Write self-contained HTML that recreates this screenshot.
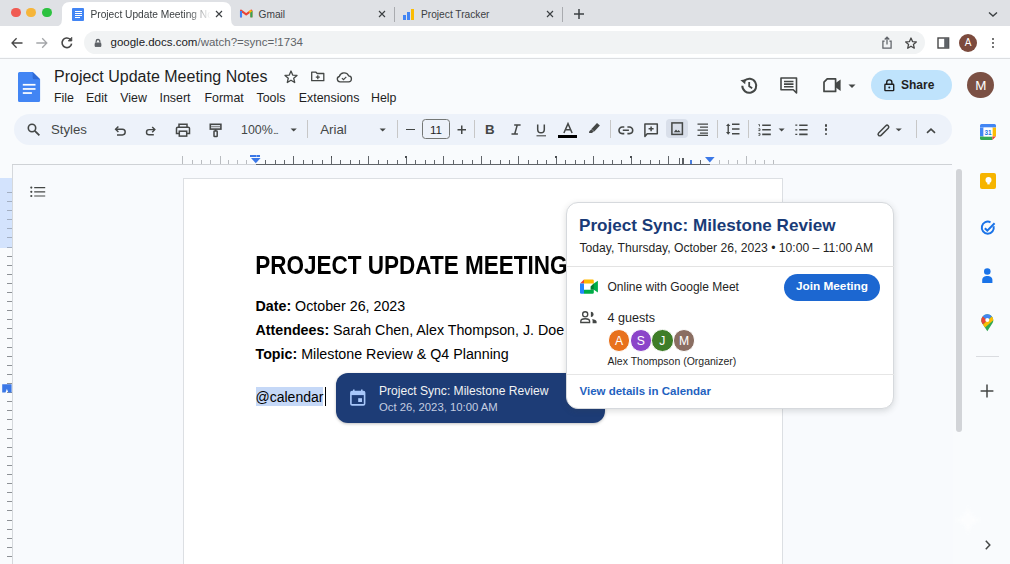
<!DOCTYPE html>
<html><head><meta charset="utf-8">
<style>
*{box-sizing:border-box;margin:0;padding:0}
html,body{width:1010px;height:564px;overflow:hidden;background:#f9fbfd;font-family:"Liberation Sans",sans-serif;color:#202124}
.a{position:absolute}
.t{position:absolute;white-space:nowrap;line-height:1}
svg{position:absolute;overflow:visible}
</style></head><body>

<!-- TAB STRIP -->
<div class="a" style="left:0;top:0;width:1010px;height:26px;background:#dfe1e5"></div>
<div class="a" style="left:10.9px;top:7.6px;width:9.8px;height:9.8px;border-radius:50%;background:#f05b53"></div>
<div class="a" style="left:26.3px;top:7.6px;width:9.8px;height:9.8px;border-radius:50%;background:#f6b53a"></div>
<div class="a" style="left:41.8px;top:7.6px;width:9.8px;height:9.8px;border-radius:50%;background:#2dc240"></div>

<!-- active tab with flares -->
<svg width="190" height="28" style="left:54px;top:0">
  <path d="M0 27 Q8 27 8 19 L8 10 Q8 2 16 2 L169 2 Q177 2 177 10 L177 19 Q177 27 185 27 Z" fill="#fff"/>
</svg>
<!-- docs tab icon -->
<div class="a" style="left:72px;top:8px;width:12px;height:12.5px;background:#4285f4;border-radius:1px"></div>
<div class="a" style="left:74.5px;top:11px;width:7px;height:1px;background:#fff"></div>
<div class="a" style="left:74.5px;top:13px;width:7px;height:1px;background:#fff"></div>
<div class="a" style="left:74.5px;top:15px;width:7px;height:1px;background:#fff"></div>
<div class="a" style="left:74.5px;top:17px;width:5px;height:1px;background:#fff"></div>
<div class="t" style="left:90.5px;top:9.5px;font-size:10.2px;color:#3c4043;width:120px;overflow:hidden;-webkit-mask-image:linear-gradient(90deg,#000 80%,transparent 100%)">Project Update Meeting Notes</div>
<svg width="10" height="10" style="left:214px;top:9px"><path d="M2 2L8 8M8 2L2 8" stroke="#3c4043" stroke-width="1.15"/></svg>

<!-- gmail -->
<svg width="13" height="10" style="left:240px;top:9.4px">
  <path d="M1 8.2V1.6L6.2 5.4L11.4 1.6V8.2" fill="none" stroke="#ea4335" stroke-width="2" stroke-linejoin="round"/>
  <path d="M1 2V8.4" stroke="#4285f4" stroke-width="2.1"/>
  <path d="M11.4 2V8.4" stroke="#34a853" stroke-width="2.1"/>
  <path d="M9.2 3.2L11.4 1.6" stroke="#fbbc04" stroke-width="2"/>
</svg>
<div class="t" style="left:258.5px;top:9.5px;font-size:10.2px;color:#3c4043">Gmail</div>
<svg width="10" height="10" style="left:376.5px;top:9px"><path d="M2 2L8 8M8 2L2 8" stroke="#3c4043" stroke-width="1.15"/></svg>
<div class="a" style="left:393.5px;top:7px;width:1px;height:15px;background:#a9abaf"></div>

<!-- project tracker chart icon -->
<div class="a" style="left:403px;top:15px;width:3px;height:5px;background:#4285f4"></div>
<div class="a" style="left:407px;top:12px;width:3px;height:8px;background:#4285f4"></div>
<div class="a" style="left:411px;top:8.5px;width:3.2px;height:11.5px;background:#fbbc04"></div>
<div class="t" style="left:421px;top:9.5px;font-size:10.2px;color:#3c4043">Project Tracker</div>
<svg width="10" height="10" style="left:544.5px;top:9px"><path d="M2 2L8 8M8 2L2 8" stroke="#3c4043" stroke-width="1.15"/></svg>
<div class="a" style="left:561.7px;top:7px;width:1px;height:15px;background:#a9abaf"></div>
<svg width="12" height="12" style="left:573px;top:8px"><path d="M6 1V11M1 6H11" stroke="#3c4043" stroke-width="1.5"/></svg>
<svg width="12" height="8" style="left:986.5px;top:10px"><path d="M2 2.5L6 6L10 2.5" fill="none" stroke="#3c4043" stroke-width="1.4"/></svg>

<!-- ADDRESS ROW -->
<div class="a" style="left:0;top:26px;width:1010px;height:31px;background:#fff"></div>
<div class="a" style="left:84px;top:31px;width:840.5px;height:23.3px;border-radius:11.6px;background:#f1f3f4"></div>
<div class="a" style="left:0;top:57.5px;width:1010px;height:1px;background:#dcdee1"></div>
<svg width="16" height="16" style="left:9px;top:35px"><path d="M13.5 8H3.2M7.6 3.3L3 8L7.6 12.7" fill="none" stroke="#474747" stroke-width="1.3"/></svg>
<svg width="16" height="16" style="left:34px;top:35px"><path d="M2.3 8H12.6M8.2 3.3L12.8 8L8.2 12.7" fill="none" stroke="#a4a6a9" stroke-width="1.3"/></svg>
<svg width="16" height="16" style="left:59px;top:35px"><path d="M12.6 8.6A4.8 4.8 0 1 1 11.2 4.4" fill="none" stroke="#474747" stroke-width="1.6"/><path d="M12.8 2.3V6H9.2Z" fill="#474747" stroke="#474747" stroke-width="0.8" stroke-linejoin="round"/></svg>
<!-- lock -->
<svg width="10" height="12" style="left:93px;top:38.4px"><path d="M3.2 4.6V3.3A1.8 1.8 0 0 1 6.8 3.3V4.6" fill="none" stroke="#5f6368" stroke-width="1.3"/><rect x="1.8" y="4.5" width="6.4" height="4.2" rx="0.6" fill="#5f6368"/><rect x="1.8" y="6" width="6.4" height="2.7" rx="0.6" fill="#5f6368"/></svg>
<div class="t" style="left:110.5px;top:37.3px;font-size:11.5px;color:#202124">google.docs.com<span style="color:#5f6368">/watch?=sync=!1734</span></div>
<!-- share -->
<svg width="14" height="14" style="left:879.7px;top:36.4px"><path d="M4.6 5H2.9V12H11.1V5H9.4" fill="none" stroke="#5f6368" stroke-width="1.25"/><path d="M7 8.6V1.4M4.7 3.5L7 1.2L9.3 3.5" fill="none" stroke="#5f6368" stroke-width="1.25"/></svg>
<!-- star -->
<svg width="14" height="14" style="left:904.2px;top:36.5px"><path d="M7 1L8.5 4.6L12.3 4.9L9.4 7.4L10.3 11.2L7 9.2L3.7 11.2L4.6 7.4L1.7 4.9L5.5 4.6Z" fill="none" stroke="#474747" stroke-width="1.3" stroke-linejoin="round"/></svg>
<!-- sidebar -->
<svg width="13" height="13" style="left:936.6px;top:37px"><rect x="1" y="1" width="10.6" height="10" fill="none" stroke="#474747" stroke-width="1.4"/><rect x="7.2" y="1" width="4.4" height="10" fill="#5f6368"/></svg>
<div class="a" style="left:959px;top:34px;width:18px;height:18px;border-radius:50%;background:#7c4a3d"></div>
<div class="t" style="left:959px;top:38.2px;width:18px;text-align:center;font-size:10px;color:#fff">A</div>
<div class="a" style="left:991.9px;top:38.2px;width:2.3px;height:2.3px;border-radius:50%;background:#474747"></div>
<div class="a" style="left:991.9px;top:42.1px;width:2.3px;height:2.3px;border-radius:50%;background:#474747"></div>
<div class="a" style="left:991.9px;top:46px;width:2.3px;height:2.3px;border-radius:50%;background:#474747"></div>

<!-- DOCS HEADER -->
<svg width="23" height="31" style="left:18px;top:71.8px">
  <path d="M1.5 0H14.7L22.1 7.3V28.4A1.5 1.5 0 0 1 20.6 29.9H1.5A1.5 1.5 0 0 1 0 28.4V1.5A1.5 1.5 0 0 1 1.5 0Z" fill="#4285f4"/>
  <path d="M14.7 0L22.1 7.3H16.2A1.5 1.5 0 0 1 14.7 5.8Z" fill="#2f6ad6"/>
  <rect x="4.8" y="11.9" width="12.7" height="1.7" fill="#fff"/>
  <rect x="4.8" y="16.1" width="12.7" height="1.7" fill="#fff"/>
  <rect x="4.8" y="20.2" width="9.1" height="1.7" fill="#fff"/>
</svg>
<div class="t" style="left:54px;top:69px;font-size:16px;color:#1f1f1f">Project Update Meeting Notes</div>
<svg width="14" height="14" style="left:284.4px;top:69.8px"><path d="M7 1L8.7 5.1L13 5.4L9.7 8.2L10.7 12.5L7 10.2L3.3 12.5L4.3 8.2L1 5.4L5.3 5.1Z" fill="none" stroke="#444746" stroke-width="1.3" stroke-linejoin="round"/></svg>
<svg width="14" height="11" style="left:310.8px;top:71.4px"><path d="M0.7 1.2H5L6.2 2.5H12.8V9.7H0.7Z" fill="none" stroke="#444746" stroke-width="1.3" stroke-linejoin="round"/><path d="M6.8 4.2V8.2M4.8 6.2H8.8" stroke="#444746" stroke-width="1.3"/></svg>
<svg width="16" height="11" style="left:336px;top:71.6px"><path d="M4 9.8H12.3A3 3 0 0 0 12.6 3.8A5 5 0 0 0 3.3 4.5A2.7 2.7 0 0 0 4 9.8Z" fill="none" stroke="#444746" stroke-width="1.3"/><path d="M5.9 6.1L7.5 7.6L10.3 4.8" fill="none" stroke="#444746" stroke-width="1.2"/></svg>

<div class="t" style="left:54px;top:91.9px;font-size:12.4px;color:#1f1f1f">File</div>
<div class="t" style="left:86px;top:91.9px;font-size:12.4px;color:#1f1f1f">Edit</div>
<div class="t" style="left:120.3px;top:91.9px;font-size:12.4px;color:#1f1f1f">View</div>
<div class="t" style="left:159.5px;top:91.9px;font-size:12.4px;color:#1f1f1f">Insert</div>
<div class="t" style="left:204.5px;top:91.9px;font-size:12.4px;color:#1f1f1f">Format</div>
<div class="t" style="left:256.5px;top:91.9px;font-size:12.4px;color:#1f1f1f">Tools</div>
<div class="t" style="left:298.8px;top:91.9px;font-size:12.4px;color:#1f1f1f">Extensions</div>
<div class="t" style="left:371px;top:91.9px;font-size:12.4px;color:#1f1f1f">Help</div>

<!-- history -->
<svg width="20" height="20" style="left:739px;top:75.5px">
  <path d="M3.3 9.8A7 7 0 1 0 5.2 5" fill="none" stroke="#444746" stroke-width="2"/>
  <path d="M1.4 4.2L6.6 3.2L6.2 8.3Z" fill="#444746"/>
  <path d="M10.2 6V10.2L13.2 12.2" fill="none" stroke="#444746" stroke-width="1.8"/>
</svg>
<!-- comment -->
<svg width="18" height="17" style="left:780px;top:76.8px">
  <path d="M1 1H16.5V16L13.3 12.8H1Z" fill="none" stroke="#444746" stroke-width="1.6" stroke-linejoin="round"/>
  <path d="M4 4.5H13.5M4 7.1H13.5M4 9.7H13.5" stroke="#444746" stroke-width="1.6"/>
</svg>
<!-- camera -->
<svg width="19" height="15" style="left:822.8px;top:77.8px">
  <path d="M4.2 0.9H12.6V13.4H1V4.1Z" fill="none" stroke="#444746" stroke-width="1.7" stroke-linejoin="round"/>
  <path d="M12.6 5.1L17.6 1.4V12.9L12.6 9.2Z" fill="#444746"/>
</svg>
<svg width="8" height="5" style="left:848px;top:83.5px"><path d="M0.5 0.5H7.5L4 4Z" fill="#444746"/></svg>

<div class="a" style="left:870.8px;top:69.6px;width:81px;height:30.5px;border-radius:15.25px;background:#bfe3fc"></div>
<svg width="11" height="13" style="left:884.3px;top:78.8px"><path d="M2.7 5.3V3.5A2.6 2.6 0 0 1 7.9 3.5V5.3" fill="none" stroke="#1f1f1f" stroke-width="1.4"/><rect x="0.9" y="5.3" width="8.8" height="6.3" rx="0.6" fill="none" stroke="#1f1f1f" stroke-width="1.4"/><circle cx="5.3" cy="8.5" r="1" fill="#1f1f1f"/></svg>
<div class="t" style="left:901px;top:78.8px;font-size:12px;font-weight:bold;color:#1f1f1f">Share</div>
<div class="a" style="left:967.4px;top:71.7px;width:26.8px;height:26.8px;border-radius:50%;background:#7b5044"></div>
<div class="t" style="left:967.4px;top:79px;width:26.8px;text-align:center;font-size:13.4px;color:#fff">M</div>

<!-- TOOLBAR -->
<div class="a" style="left:14px;top:113.5px;width:937.6px;height:31.4px;border-radius:15.7px;background:#edf2fa"></div>
<svg width="14" height="14" style="left:27.4px;top:122.8px"><circle cx="5" cy="5" r="3.7" fill="none" stroke="#444746" stroke-width="1.6"/><path d="M7.8 7.8L12.4 12.4" stroke="#444746" stroke-width="1.8"/></svg>
<div class="t" style="left:51px;top:123.4px;font-size:13.2px;color:#444746">Styles</div>
<!-- undo -->
<svg width="14" height="12" style="left:113.5px;top:125px"><path d="M1.8 4.3H8.4A2.8 2.8 0 0 1 8.4 9.9H3" fill="none" stroke="#444746" stroke-width="1.45"/><path d="M4.4 1.5L1.6 4.3L4.4 7.1" fill="none" stroke="#444746" stroke-width="1.45"/></svg>
<!-- redo -->
<svg width="12" height="12" style="left:145.3px;top:125px"><path d="M9.6 4.6H4.1A2.6 2.6 0 0 0 4.1 9.8H8.8" fill="none" stroke="#444746" stroke-width="1.45"/><path d="M7.2 2L9.8 4.6L7.2 7.2" fill="none" stroke="#444746" stroke-width="1.45"/></svg>
<!-- print -->
<svg width="16" height="14" style="left:175px;top:123px"><path d="M4 4.2V1.3H12V4.2" fill="none" stroke="#444746" stroke-width="1.5"/><path d="M4 10.6H1.5V5.5A1.3 1.3 0 0 1 2.8 4.2H13.2A1.3 1.3 0 0 1 14.5 5.5V10.6H12" fill="none" stroke="#444746" stroke-width="1.5"/><rect x="4.3" y="8.2" width="7.4" height="4.9" fill="none" stroke="#444746" stroke-width="1.5"/></svg>
<!-- paint format -->
<svg width="14" height="15" style="left:208.5px;top:122.5px"><rect x="1.3" y="1.3" width="10.6" height="4.8" fill="none" stroke="#444746" stroke-width="1.6"/><rect x="2.1" y="3" width="9" height="1.3" fill="#8a8d90"/><path d="M6.6 6.1V8" stroke="#444746" stroke-width="1.6"/><rect x="5" y="8" width="3.2" height="5.6" rx="0.6" fill="none" stroke="#444746" stroke-width="1.5"/></svg>
<div class="t" style="left:241px;top:123.7px;font-size:12.4px;color:#444746">100%<span style="font-size:6.5px;letter-spacing:-0.3px;margin-left:0.8px;font-weight:bold">...</span></div>
<svg width="8" height="5" style="left:290px;top:127.8px"><path d="M0.6 0.4H6.8L3.7 3.4Z" fill="#444746"/></svg>
<div class="a" style="left:307.3px;top:120px;width:1px;height:17.7px;background:#c7c7c7"></div>
<div class="t" style="left:320.2px;top:123.2px;font-size:13.3px;color:#444746">Arial</div>
<svg width="8" height="5" style="left:378.5px;top:127.8px"><path d="M0.6 0.4H6.8L3.7 3.4Z" fill="#444746"/></svg>
<div class="a" style="left:397.2px;top:120px;width:1px;height:17.7px;background:#c7c7c7"></div>
<div class="a" style="left:405.8px;top:128.9px;width:9px;height:1.5px;background:#444746"></div>
<div class="a" style="left:422px;top:119.2px;width:27.7px;height:20.2px;border:1px solid #747775;border-radius:3.5px"></div>
<div class="t" style="left:422.2px;top:124.1px;width:27.7px;text-align:center;font-size:11.6px;color:#1f1f1f">11</div>
<svg width="10" height="10" style="left:456.5px;top:125px"><path d="M4.75 0.5V9M0.5 4.75H9" stroke="#444746" stroke-width="1.5"/></svg>
<div class="a" style="left:474.3px;top:120.3px;width:1px;height:17.3px;background:#c7c7c7"></div>
<div class="t" style="left:485px;top:123.2px;font-size:13.3px;font-weight:bold;color:#444746">B</div>
<svg width="10" height="11" style="left:510.8px;top:124px"><path d="M3.2 0.9H9.6M0.5 10H6.9M6.3 0.9L3.7 10" fill="none" stroke="#444746" stroke-width="1.5"/></svg>
<svg width="11" height="13" style="left:535.8px;top:124px"><path d="M1.7 0.5V5.5A3.3 3.3 0 0 0 8.3 5.5V0.5" fill="none" stroke="#444746" stroke-width="1.5"/><path d="M0.5 11.8H10" stroke="#444746" stroke-width="1.1"/></svg>
<svg width="11" height="11" style="left:562.5px;top:123px"><path d="M0.9 10L5 0.6L9.1 10M2.5 6.7H7.5" fill="none" stroke="#444746" stroke-width="1.5"/></svg>
<div class="a" style="left:558.2px;top:135.2px;width:18.4px;height:2.7px;background:#000"></div>
<svg width="13" height="12" style="left:588px;top:122.4px"><path d="M9 0.9L11.9 3.5L6.3 9.4L3.4 6.9Z" fill="#444746"/><path d="M3.4 7.3L5.9 9.6L3.9 10.9L1 11L1.3 9.3Z" fill="#444746"/></svg>
<div class="a" style="left:609.6px;top:120.3px;width:1px;height:17.3px;background:#c7c7c7"></div>
<!-- link -->
<svg width="16" height="9" style="left:618.3px;top:125.8px"><path d="M6.3 1H4.3A3.3 3.3 0 0 0 4.3 7.6H6.3M9.4 1H11.4A3.3 3.3 0 0 1 11.4 7.6H9.4M4.8 4.3H10.9" fill="none" stroke="#444746" stroke-width="1.6"/></svg>
<!-- comment+ -->
<svg width="15" height="15" style="left:644.4px;top:122.8px"><path d="M0.9 0.9H13.3V10.8H3.2L0.9 13.4Z" fill="none" stroke="#444746" stroke-width="1.5" stroke-linejoin="round"/><path d="M7.1 3.4V8.3M4.6 5.85H9.6" stroke="#444746" stroke-width="1.5"/></svg>
<div class="a" style="left:665.8px;top:119px;width:22.6px;height:19.4px;border-radius:4px;background:#d9dfea"></div>
<svg width="13" height="14" style="left:671.3px;top:122.3px"><rect x="0.9" y="0.9" width="10.5" height="11.5" fill="none" stroke="#444746" stroke-width="1.5"/><path d="M2.8 10.2L5 7.5L6.5 9.2L7.6 8L9.6 10.2Z" fill="#444746"/></svg>
<!-- align -->
<svg width="12" height="13" style="left:697.4px;top:122.8px"><path d="M0.5 1.1H11M3 4.1H11M0.5 7.1H11M3 10.1H11M0.5 12.3H11" stroke="#444746" stroke-width="1.3"/></svg>
<div class="a" style="left:716.5px;top:120.3px;width:1px;height:17.3px;background:#c7c7c7"></div>
<!-- line spacing -->
<svg width="14" height="13" style="left:725.7px;top:123.4px"><path d="M6 1.2H13.5M6 6H13.5M6 10.8H13.5" stroke="#444746" stroke-width="1.6"/><path d="M2.2 2V10" stroke="#444746" stroke-width="1.4"/><path d="M0 3L2.2 0.4L4.4 3Z M0 9L2.2 11.8L4.4 9Z" fill="#444746"/></svg>
<div class="a" style="left:748px;top:120.3px;width:1px;height:17.3px;background:#c7c7c7"></div>
<!-- numbered list -->
<svg width="13" height="12" style="left:757.6px;top:124px"><path d="M4.2 1.2H12.8M4.2 5.8H12.8M4.2 10.4H12.8" stroke="#444746" stroke-width="1.6"/><path d="M0.4 0.6H1.5V2.4M0.4 4.8H2V6.6H0.4M0.4 9.4H2V11.3H0.4" fill="none" stroke="#444746" stroke-width="0.9"/></svg>
<svg width="8" height="5" style="left:777.5px;top:127.6px"><path d="M0.6 0.4H6.6L3.6 3.4Z" fill="#444746"/></svg>
<!-- checklist -->
<svg width="13" height="12" style="left:794.6px;top:124px"><path d="M4.2 1.2H12.6M4.2 5.8H12.6M4.2 10.4H12.6" stroke="#444746" stroke-width="1.6"/><path d="M0.3 1.2H2.3M0.3 5.8H2.3M0.3 10.4H2.3" stroke="#444746" stroke-width="1.2"/></svg>
<div class="a" style="left:824.8px;top:124px;width:2.7px;height:2.7px;border-radius:50%;background:#444746"></div>
<div class="a" style="left:824.8px;top:128.4px;width:2.7px;height:2.7px;border-radius:50%;background:#444746"></div>
<div class="a" style="left:824.8px;top:132.8px;width:2.7px;height:2.7px;border-radius:50%;background:#444746"></div>
<!-- pencil -->
<svg width="14" height="14" style="left:876.7px;top:122.6px"><rect x="-0.6" y="5.3" width="13.6" height="3.4" rx="1.7" transform="rotate(-45 7 7)" fill="none" stroke="#444746" stroke-width="1.5"/></svg>
<svg width="8" height="5" style="left:894.8px;top:128px"><path d="M0.6 0.4H6.8L3.7 3.2Z" fill="#444746"/></svg>
<div class="a" style="left:916px;top:120.4px;width:1px;height:17.3px;background:#c7c7c7"></div>
<svg width="10" height="6" style="left:926px;top:127.8px"><path d="M1 4.9L5 1.2L9 4.9" fill="none" stroke="#444746" stroke-width="1.6"/></svg>

<!-- canvas -->
<div class="a" style="left:12px;top:164px;width:941px;height:400px;background:#f8fafd"></div>
<div class="a" style="left:11.5px;top:164px;width:1px;height:400px;background:#d5d8dc"></div>
<div class="a" style="left:12px;top:163.6px;width:243.7px;height:1px;background:#cfd2d6"></div>
<div class="a" style="left:255.7px;top:163.6px;width:454px;height:1px;background:#5f6368"></div>
<div class="a" style="left:709.8px;top:163.6px;width:242.5px;height:1px;background:#cfd2d6"></div>
<div class="a" style="left:182.2px;top:155.5px;width:1px;height:8.5px;background:#b9bcc0"></div>
<div class="a" style="left:191.7px;top:159.7px;width:1px;height:4.3px;background:#b9bcc0"></div>
<div class="a" style="left:200.8px;top:159.7px;width:1px;height:4.3px;background:#b9bcc0"></div>
<div class="a" style="left:210.1px;top:159.7px;width:1px;height:4.3px;background:#b9bcc0"></div>
<div class="a" style="left:219.5px;top:155.5px;width:1px;height:8.5px;background:#b9bcc0"></div>
<div class="a" style="left:227.9px;top:159.7px;width:1px;height:4.3px;background:#b9bcc0"></div>
<div class="a" style="left:237.2px;top:159.7px;width:1px;height:4.3px;background:#b9bcc0"></div>
<div class="a" style="left:246.3px;top:159.7px;width:1px;height:4.3px;background:#b9bcc0"></div>
<div class="a" style="left:265.3px;top:159.7px;width:1px;height:4.3px;background:#62666b"></div>
<div class="a" style="left:274.6px;top:159.7px;width:1px;height:4.3px;background:#62666b"></div>
<div class="a" style="left:284.0px;top:159.7px;width:1px;height:4.3px;background:#62666b"></div>
<div class="a" style="left:293.4px;top:155.5px;width:1px;height:8.5px;background:#62666b"></div>
<div class="a" style="left:302.8px;top:159.7px;width:1px;height:4.3px;background:#62666b"></div>
<div class="a" style="left:312.1px;top:159.7px;width:1px;height:4.3px;background:#62666b"></div>
<div class="a" style="left:321.5px;top:159.7px;width:1px;height:4.3px;background:#62666b"></div>
<div class="a" style="left:330.9px;top:155.5px;width:1px;height:8.5px;background:#62666b"></div>
<div class="a" style="left:330.5px;top:155.6px;width:1.8px;height:2.4px;background:#4a4e52"></div>
<div class="a" style="left:340.2px;top:159.7px;width:1px;height:4.3px;background:#62666b"></div>
<div class="a" style="left:349.6px;top:159.7px;width:1px;height:4.3px;background:#62666b"></div>
<div class="a" style="left:359.0px;top:159.7px;width:1px;height:4.3px;background:#62666b"></div>
<div class="a" style="left:368.4px;top:155.5px;width:1px;height:8.5px;background:#62666b"></div>
<div class="a" style="left:377.7px;top:159.7px;width:1px;height:4.3px;background:#62666b"></div>
<div class="a" style="left:387.1px;top:159.7px;width:1px;height:4.3px;background:#62666b"></div>
<div class="a" style="left:396.5px;top:159.7px;width:1px;height:4.3px;background:#62666b"></div>
<div class="a" style="left:405.8px;top:155.5px;width:1px;height:8.5px;background:#62666b"></div>
<div class="a" style="left:405.4px;top:155.6px;width:1.8px;height:2.4px;background:#4a4e52"></div>
<div class="a" style="left:415.2px;top:159.7px;width:1px;height:4.3px;background:#62666b"></div>
<div class="a" style="left:424.6px;top:159.7px;width:1px;height:4.3px;background:#62666b"></div>
<div class="a" style="left:434.0px;top:159.7px;width:1px;height:4.3px;background:#62666b"></div>
<div class="a" style="left:443.3px;top:155.5px;width:1px;height:8.5px;background:#62666b"></div>
<div class="a" style="left:452.7px;top:159.7px;width:1px;height:4.3px;background:#62666b"></div>
<div class="a" style="left:462.1px;top:159.7px;width:1px;height:4.3px;background:#62666b"></div>
<div class="a" style="left:471.5px;top:159.7px;width:1px;height:4.3px;background:#62666b"></div>
<div class="a" style="left:480.8px;top:155.5px;width:1px;height:8.5px;background:#62666b"></div>
<div class="a" style="left:490.2px;top:159.7px;width:1px;height:4.3px;background:#62666b"></div>
<div class="a" style="left:499.6px;top:159.7px;width:1px;height:4.3px;background:#62666b"></div>
<div class="a" style="left:508.9px;top:159.7px;width:1px;height:4.3px;background:#62666b"></div>
<div class="a" style="left:518.3px;top:155.5px;width:1px;height:8.5px;background:#62666b"></div>
<div class="a" style="left:527.7px;top:159.7px;width:1px;height:4.3px;background:#62666b"></div>
<div class="a" style="left:537.1px;top:159.7px;width:1px;height:4.3px;background:#62666b"></div>
<div class="a" style="left:546.4px;top:159.7px;width:1px;height:4.3px;background:#62666b"></div>
<div class="a" style="left:555.8px;top:155.5px;width:1px;height:8.5px;background:#62666b"></div>
<div class="a" style="left:555.4px;top:155.6px;width:1.8px;height:2.4px;background:#4a4e52"></div>
<div class="a" style="left:565.2px;top:159.7px;width:1px;height:4.3px;background:#62666b"></div>
<div class="a" style="left:574.5px;top:159.7px;width:1px;height:4.3px;background:#62666b"></div>
<div class="a" style="left:583.9px;top:159.7px;width:1px;height:4.3px;background:#62666b"></div>
<div class="a" style="left:593.3px;top:155.5px;width:1px;height:8.5px;background:#62666b"></div>
<div class="a" style="left:602.7px;top:159.7px;width:1px;height:4.3px;background:#62666b"></div>
<div class="a" style="left:612.0px;top:159.7px;width:1px;height:4.3px;background:#62666b"></div>
<div class="a" style="left:621.4px;top:159.7px;width:1px;height:4.3px;background:#62666b"></div>
<div class="a" style="left:630.8px;top:155.5px;width:1px;height:8.5px;background:#62666b"></div>
<div class="a" style="left:630.4px;top:155.6px;width:1.8px;height:2.4px;background:#4a4e52"></div>
<div class="a" style="left:640.1px;top:159.7px;width:1px;height:4.3px;background:#62666b"></div>
<div class="a" style="left:649.5px;top:159.7px;width:1px;height:4.3px;background:#62666b"></div>
<div class="a" style="left:658.9px;top:159.7px;width:1px;height:4.3px;background:#62666b"></div>
<div class="a" style="left:668.3px;top:155.5px;width:1px;height:8.5px;background:#62666b"></div>
<div class="a" style="left:678.9px;top:158.0px;width:1px;height:6px;background:#62666b"></div>
<div class="a" style="left:682.2px;top:158.3px;width:1.6px;height:5.5px;background:#5a5e62"></div>
<div class="a" style="left:690.4px;top:159.6px;width:1.8px;height:4px;background:#4a7fe0"></div>
<div class="a" style="left:700.1px;top:159.7px;width:1px;height:4.3px;background:#62666b"></div>
<div class="a" style="left:719.0px;top:159.7px;width:1px;height:4.3px;background:#b9bcc0"></div>
<div class="a" style="left:727.9px;top:159.7px;width:1px;height:4.3px;background:#b9bcc0"></div>
<div class="a" style="left:736.8px;top:159.7px;width:1px;height:4.3px;background:#b9bcc0"></div>
<div class="a" style="left:745.7px;top:155.5px;width:1px;height:8.5px;background:#b9bcc0"></div>
<div class="a" style="left:754.6px;top:159.7px;width:1px;height:4.3px;background:#b9bcc0"></div>
<div class="a" style="left:764.0px;top:159.7px;width:1px;height:4.3px;background:#b9bcc0"></div>
<div class="a" style="left:773.2px;top:159.7px;width:1px;height:4.3px;background:#b9bcc0"></div>
<div class="a" style="left:250.4px;top:154.8px;width:9.6px;height:2.2px;background:repeating-linear-gradient(90deg,#3b78e7 0 2.6px,#7ea6ee 2.6px 3.5px)"></div>
<svg width="10" height="6" style="left:250.6px;top:158.4px"><path d="M0 0H9.6L4.8 5.2Z" fill="#3b78e7"/></svg>
<svg width="10" height="6" style="left:705px;top:157.2px"><path d="M0 0H9.6L4.8 5.4Z" fill="#3b78e7"/></svg>
<div class="a" style="left:0;top:178.4px;width:11.5px;height:69.5px;background:#d3e3fd"></div>
<div class="a" style="left:6.5px;top:191.9px;width:5px;height:1px;background:#a3afc2"></div>
<div class="a" style="left:6.5px;top:201.0px;width:5px;height:1px;background:#a3afc2"></div>
<div class="a" style="left:6.5px;top:210.1px;width:5px;height:1px;background:#a3afc2"></div>
<div class="a" style="left:6.5px;top:219.2px;width:5px;height:1px;background:#a3afc2"></div>
<div class="a" style="left:6.5px;top:228.3px;width:5px;height:1px;background:#a3afc2"></div>
<div class="a" style="left:6.5px;top:237.4px;width:5px;height:1px;background:#a3afc2"></div>
<div class="a" style="left:6.5px;top:246.5px;width:5px;height:1px;background:#a3afc2"></div>
<div class="a" style="left:6.5px;top:255.6px;width:5px;height:1px;background:#8d9196"></div>
<div class="a" style="left:6.5px;top:264.7px;width:5px;height:1px;background:#8d9196"></div>
<div class="a" style="left:6.5px;top:273.8px;width:5px;height:1px;background:#8d9196"></div>
<div class="a" style="left:6.5px;top:282.9px;width:5px;height:1px;background:#8d9196"></div>
<div class="a" style="left:6.5px;top:292.0px;width:5px;height:1px;background:#8d9196"></div>
<div class="a" style="left:6.5px;top:301.1px;width:5px;height:1px;background:#8d9196"></div>
<div class="a" style="left:6.5px;top:310.2px;width:5px;height:1px;background:#8d9196"></div>
<div class="a" style="left:6.5px;top:319.3px;width:5px;height:1px;background:#8d9196"></div>
<div class="a" style="left:6.5px;top:328.4px;width:5px;height:1px;background:#8d9196"></div>
<div class="a" style="left:6.5px;top:337.5px;width:5px;height:1px;background:#8d9196"></div>
<div class="a" style="left:6.5px;top:346.6px;width:5px;height:1px;background:#8d9196"></div>
<div class="a" style="left:6.5px;top:355.7px;width:5px;height:1px;background:#8d9196"></div>
<div class="a" style="left:6.5px;top:364.8px;width:5px;height:1px;background:#8d9196"></div>
<div class="a" style="left:6.5px;top:373.9px;width:5px;height:1px;background:#8d9196"></div>
<div class="a" style="left:6.5px;top:383.0px;width:5px;height:1px;background:#8d9196"></div>
<div class="a" style="left:6.5px;top:392.1px;width:5px;height:1px;background:#8d9196"></div>
<div class="a" style="left:6.5px;top:401.2px;width:5px;height:1px;background:#8d9196"></div>
<div class="a" style="left:6.5px;top:410.3px;width:5px;height:1px;background:#8d9196"></div>
<div class="a" style="left:6.5px;top:419.4px;width:5px;height:1px;background:#8d9196"></div>
<div class="a" style="left:6.5px;top:428.5px;width:5px;height:1px;background:#8d9196"></div>
<div class="a" style="left:6.5px;top:437.6px;width:5px;height:1px;background:#8d9196"></div>
<div class="a" style="left:6.5px;top:446.7px;width:5px;height:1px;background:#8d9196"></div>
<div class="a" style="left:6.5px;top:455.8px;width:5px;height:1px;background:#8d9196"></div>
<div class="a" style="left:6.5px;top:464.9px;width:5px;height:1px;background:#8d9196"></div>
<div class="a" style="left:6.5px;top:474.0px;width:5px;height:1px;background:#8d9196"></div>
<div class="a" style="left:6.5px;top:483.1px;width:5px;height:1px;background:#8d9196"></div>
<div class="a" style="left:6.5px;top:492.2px;width:5px;height:1px;background:#8d9196"></div>
<div class="a" style="left:6.5px;top:501.3px;width:5px;height:1px;background:#8d9196"></div>
<div class="a" style="left:6.5px;top:510.4px;width:5px;height:1px;background:#8d9196"></div>
<div class="a" style="left:6.5px;top:519.5px;width:5px;height:1px;background:#8d9196"></div>
<div class="a" style="left:6.5px;top:528.6px;width:5px;height:1px;background:#8d9196"></div>
<div class="a" style="left:6.5px;top:537.7px;width:5px;height:1px;background:#8d9196"></div>
<div class="a" style="left:6.5px;top:546.8px;width:5px;height:1px;background:#8d9196"></div>
<div class="a" style="left:6.5px;top:555.9px;width:5px;height:1px;background:#8d9196"></div>
<svg width="11" height="10" style="left:1.6px;top:384px"><path d="M0.2 0.2H9.6V8.6H6.3L4.9 4.8L3.5 8.6H0.2Z" fill="#3b78e7"/></svg>
<svg width="16" height="12" style="left:29.6px;top:185.5px"><circle cx="1.3" cy="1.6" r="1.1" fill="#444746"/><circle cx="1.3" cy="5.8" r="1.1" fill="#444746"/><circle cx="1.3" cy="10" r="1.1" fill="#444746"/><path d="M4.2 1.6H15.2M4.2 5.8H15.2M4.2 10H15.2" stroke="#444746" stroke-width="1.2"/></svg>
<div class="a" style="left:182.8px;top:178.2px;width:600.6px;height:400px;background:#fff;border:1px solid #dcdfe3"></div>
<div class="a" style="left:956px;top:169px;width:6.3px;height:262.5px;border-radius:3.2px;background:#d2d4d8"></div>
<!-- DOC -->
<div class="t" style="left:255.3px;top:254.1px;font-size:22.5px;font-weight:bold;color:#000;transform:scaleY(1.13);transform-origin:0 0">PROJECT UPDATE MEETING</div>
<div class="t" style="left:255.5px;top:298.6px;font-size:14.25px;color:#000"><b>Date:</b> October 26, 2023</div>
<div class="t" style="left:255.5px;top:322.9px;font-size:14.25px;color:#000"><b>Attendees:</b> Sarah Chen, Alex Thompson, J. Doe</div>
<div class="t" style="left:255.5px;top:346.7px;font-size:14.25px;color:#000"><b>Topic:</b> Milestone Review &amp; Q4 Planning</div>
<div class="a" style="left:256.1px;top:386.7px;width:67.2px;height:19.1px;background:#c5d8f7"></div>
<div class="t" style="left:255.5px;top:389.6px;font-size:14px;color:#000">@calendar</div>
<div class="a" style="left:324.7px;top:386.7px;width:1.2px;height:19.1px;background:#000"></div>

<!-- dark chip popup -->
<div class="a" style="left:335.5px;top:373.3px;width:269px;height:49.9px;border-radius:12px;background:#1d3c76;box-shadow:0 1px 3px rgba(0,0,0,.25)"></div>
<svg width="17" height="18" style="left:350.2px;top:389.2px"><path d="M3.8 0.4V2.8M11.8 0.4V2.8" stroke="#a8c7fa" stroke-width="1.6"/><rect x="0.9" y="2.5" width="13.7" height="13.4" rx="1.2" fill="none" stroke="#a8c7fa" stroke-width="1.6"/><rect x="0.9" y="2.5" width="13.7" height="3.6" fill="#a8c7fa"/><rect x="8.2" y="9.2" width="3.8" height="3.8" fill="#a8c7fa"/></svg>
<div class="t" style="left:379px;top:384.8px;font-size:12.1px;color:#f1f3f4">Project Sync: Milestone Review</div>
<div class="t" style="left:379px;top:401.9px;font-size:11.3px;color:#c4cde0">Oct 26, 2023, 10:00 AM</div>

<!-- card -->
<div class="a" style="left:565.8px;top:202px;width:328.5px;height:207px;border-radius:12px;background:#fff;border:1px solid #d6d9dd;box-shadow:0 2px 6px rgba(60,64,67,.18)"></div>
<div class="t" style="left:579px;top:217.2px;font-size:17.1px;font-weight:bold;color:#193b77">Project Sync: Milestone Review</div>
<div class="t" style="left:579.5px;top:242.2px;font-size:12.15px;color:#1f1f1f">Today, Thursday, October 26, 2023 • 10:00 – 11:00 AM</div>
<div class="a" style="left:566.5px;top:265.6px;width:327px;height:1px;background:#e3e3e3"></div>
<!-- meet icon -->
<svg width="19" height="16" style="left:580.1px;top:279.2px">
  <path d="M4 0.6H12.6A1.2 1.2 0 0 1 13.8 1.8V4.6H4Z" fill="#ffba00"/>
  <path d="M0 4.4L4 0.6V4.4Z" fill="#ea4335"/>
  <path d="M0 4.4H4V14.8H1.2A1.2 1.2 0 0 1 0 13.6Z" fill="#2684fc"/>
  <path d="M4 10.8H13.8V13.6A1.2 1.2 0 0 1 12.6 14.8H4Z" fill="#00ac47"/>
  <path d="M10.6 7.7L13.8 4.6V10.8H10.6Z" fill="#00832d"/>
  <path d="M13.8 4.6L17.9 1.8V13.4L13.8 10.8Z" fill="#00ac47"/>
  <path d="M10.6 7.7L13.8 4.6V10.8Z" fill="#00832d"/>
</svg>
<div class="t" style="left:607.5px;top:280.7px;font-size:12px;color:#1f1f1f">Online with Google Meet</div>
<div class="a" style="left:784px;top:273.5px;width:96px;height:27.1px;border-radius:13.5px;background:#1c67d1"></div>
<div class="t" style="left:784px;top:281px;width:96px;text-align:center;font-size:11.8px;font-weight:bold;color:#fff">Join Meeting</div>
<!-- guests icon -->
<svg width="18" height="13" style="left:580.4px;top:311.4px"><circle cx="5.2" cy="3.3" r="2.55" fill="none" stroke="#444746" stroke-width="1.35"/><path d="M0.8 11.5V10.3C0.8 8.6 3 7.7 5.2 7.7C7.4 7.7 9.6 8.6 9.6 10.3V11.5Z" fill="none" stroke="#444746" stroke-width="1.35"/><path d="M10.9 0.7A2.6 2.6 0 0 1 10.9 5.9Z" fill="#444746"/><path d="M12.2 7.9C14.8 8.3 16.6 9.2 16.6 10.5V12.2H12.6V10.3C12.6 9.4 12.5 8.6 12.2 7.9Z" fill="#444746"/></svg>
<div class="t" style="left:607.5px;top:311.6px;font-size:12.6px;color:#1f1f1f">4 guests</div>
<div class="a" style="left:607.9px;top:329px;width:22.6px;height:22.6px;border-radius:50%;background:#e8711c;border:0.5px solid #fff"></div>
<div class="a" style="left:629.5px;top:329px;width:22.6px;height:22.6px;border-radius:50%;background:#8b44c9;border:0.5px solid #fff"></div>
<div class="a" style="left:651.1px;top:329px;width:22.6px;height:22.6px;border-radius:50%;background:#3e7d28;border:0.5px solid #fff"></div>
<div class="a" style="left:672.7px;top:329px;width:22.6px;height:22.6px;border-radius:50%;background:#8a6e62;border:0.5px solid #fff"></div>
<div class="t" style="left:607.9px;top:335.4px;width:22.6px;text-align:center;font-size:12.2px;color:#fff">A</div>
<div class="t" style="left:629.5px;top:335.4px;width:22.6px;text-align:center;font-size:12.2px;color:#fff">S</div>
<div class="t" style="left:651.1px;top:335.4px;width:22.6px;text-align:center;font-size:12.2px;color:#fff">J</div>
<div class="t" style="left:672.7px;top:335.4px;width:22.6px;text-align:center;font-size:12.2px;color:#fff">M</div>
<div class="t" style="left:607.5px;top:355.5px;font-size:10.5px;color:#1f1f1f">Alex Thompson (Organizer)</div>
<div class="a" style="left:566.5px;top:374px;width:327px;height:1px;background:#e6e6e6"></div>
<div class="t" style="left:579.5px;top:385.9px;font-size:11.5px;font-weight:bold;color:#1f62c0">View details in Calendar</div>

<!-- RIGHT PANEL -->
<svg width="17" height="17" style="left:979.5px;top:124px">
  <rect x="0" y="0" width="16" height="16" rx="1.5" fill="#fff"/>
  <path d="M1.5 0H14.5A1.5 1.5 0 0 1 16 1.5V3.6H0V1.5A1.5 1.5 0 0 1 1.5 0Z" fill="#4285f4"/>
  <path d="M0 3.6H3.6V12.4H0Z" fill="#4285f4"/>
  <path d="M0 12.4H12.4V16H1.5A1.5 1.5 0 0 1 0 14.5Z" fill="#34a853"/>
  <path d="M12.4 3.6H16V12.4H12.4Z" fill="#fbbc04"/>
  <path d="M12.4 12.4H16L12.4 16Z" fill="#ea4335"/>
  <rect x="3.6" y="3.6" width="8.8" height="8.8" fill="#fff"/>
  <text x="8" y="10.9" font-size="6.4" font-weight="bold" text-anchor="middle" fill="#1a73e8" font-family="Liberation Sans">31</text>
</svg>
<div class="a" style="left:980px;top:172.9px;width:15.9px;height:15.8px;border-radius:2px;background:#f6b400"></div>
<svg width="8" height="10" style="left:984.5px;top:175.5px"><circle cx="3.5" cy="3.9" r="3" fill="#fff"/><rect x="2.3" y="6.4" width="2.4" height="2" fill="#fff"/></svg>
<svg width="17" height="17" style="left:980px;top:220.3px"><path d="M13.6 6.2A6 6 0 1 1 10.5 2.3" fill="none" stroke="#1a73e8" stroke-width="2"/><path d="M4.8 8.3L7.3 10.6L14.6 3.2" fill="none" stroke="#1a73e8" stroke-width="2"/></svg>
<svg width="12" height="16" style="left:982px;top:268.2px"><circle cx="5.3" cy="3.5" r="3.3" fill="#1a73e8"/><path d="M0.2 14.9V12C0.2 9.4 2.6 8.1 5.3 8.1C8 8.1 10.4 9.4 10.4 12V14.9Z" fill="#1a73e8"/></svg>
<svg width="13" height="18" style="left:981px;top:313.6px">
  <path d="M6.3 0.3A6 6 0 0 0 0.3 6.3C0.3 8 1 9.3 2 10.6L6.3 17.3L10.6 10.6C11.6 9.3 12.3 8 12.3 6.3A6 6 0 0 0 6.3 0.3Z" fill="#34a853"/>
  <path d="M6.3 0.3A6 6 0 0 0 1.7 2.4L6.3 6.6L10.9 2.4A6 6 0 0 0 6.3 0.3Z" fill="#4285f4"/>
  <path d="M1.7 2.4A6 6 0 0 0 0.3 6.3C0.3 8 1 9.3 2 10.6L6.3 6.6Z" fill="#ea4335"/>
  <path d="M10.9 2.4L2 10.6L4 13.6L12.3 6.3A6 6 0 0 0 10.9 2.4Z" fill="#fbbc04"/>
  <circle cx="6.3" cy="6.1" r="2" fill="#fff"/>
</svg>
<div class="a" style="left:975.5px;top:356px;width:23px;height:1px;background:#dadce0"></div>
<svg width="14" height="14" style="left:980.2px;top:384.4px"><path d="M7 0.6V13.4M0.6 7H13.4" stroke="#444746" stroke-width="1.5"/></svg>
<svg width="8" height="12" style="left:983.5px;top:539px"><path d="M1.8 1.8L5.8 6L1.8 10.2" fill="none" stroke="#444746" stroke-width="1.5"/></svg>
<svg width="34" height="34" style="left:951px;top:503px;opacity:.55;filter:blur(1.5px)"><path d="M17 2C18 11 23 16 32 17C23 18 18 23 17 32C16 23 11 18 2 17C11 16 16 11 17 2Z" fill="#ffffff"/></svg>
</body></html>
